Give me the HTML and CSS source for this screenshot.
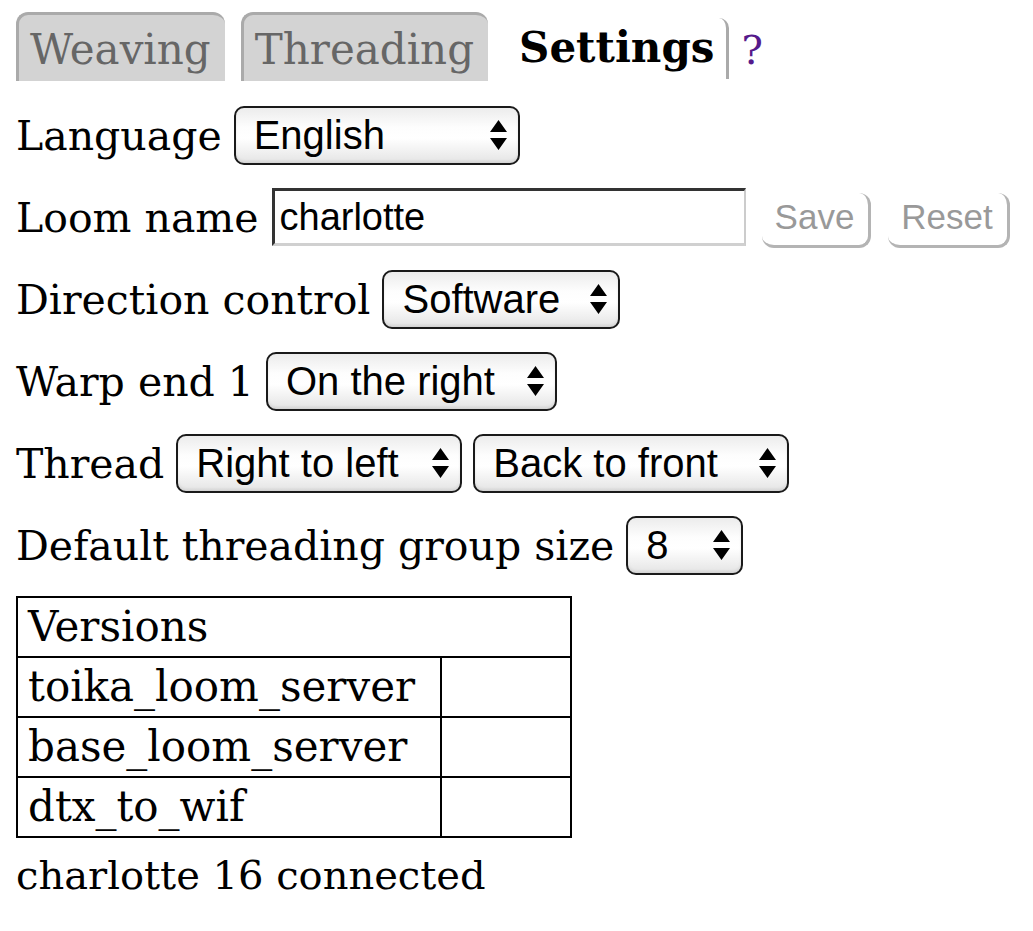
FILE: index.html
```html
<!DOCTYPE html>
<html lang="en">
<head>
<meta charset="utf-8">
<title>Settings</title>
<link rel="stylesheet" href="styles.css">
</head>
<body>
<div class="page">
  <nav class="tabs">
    <span class="tab">Weaving</span>
    <span class="tab">Threading</span>
    <span class="tab tab-active">Settings</span>
    <a class="help" href="#">?</a>
  </nav>

  <div class="row">
    <span class="label">Language</span>
    <span class="sel w-lang"><select><option>English</option></select><svg class="arrows" viewBox="0 0 18 32"><path d="M9 1 L17.5 13 L0.5 13 Z M0.5 19 L17.5 19 L9 31 Z"/></svg></span>
  </div>

  <div class="row">
    <span class="label">Loom name</span>
    <input class="text" type="text" value="charlotte">
    <button class="btn w-save" disabled>Save</button>
    <button class="btn w-reset" disabled>Reset</button>
  </div>

  <div class="row">
    <span class="label">Direction control</span>
    <span class="sel w-dir"><select><option>Software</option></select><svg class="arrows" viewBox="0 0 18 32"><path d="M9 1 L17.5 13 L0.5 13 Z M0.5 19 L17.5 19 L9 31 Z"/></svg></span>
  </div>

  <div class="row">
    <span class="label">Warp end 1</span>
    <span class="sel w-warp"><select><option>On the right</option></select><svg class="arrows" viewBox="0 0 18 32"><path d="M9 1 L17.5 13 L0.5 13 Z M0.5 19 L17.5 19 L9 31 Z"/></svg></span>
  </div>

  <div class="row">
    <span class="label">Thread</span>
    <span class="sel w-th1"><select><option>Right to left</option></select><svg class="arrows" viewBox="0 0 18 32"><path d="M9 1 L17.5 13 L0.5 13 Z M0.5 19 L17.5 19 L9 31 Z"/></svg></span>
    <span class="sel w-th2"><select><option>Back to front</option></select><svg class="arrows" viewBox="0 0 18 32"><path d="M9 1 L17.5 13 L0.5 13 Z M0.5 19 L17.5 19 L9 31 Z"/></svg></span>
  </div>

  <div class="row">
    <span class="label">Default threading group size</span>
    <span class="sel w-group"><select><option>8</option></select><svg class="arrows" viewBox="0 0 18 32"><path d="M9 1 L17.5 13 L0.5 13 Z M0.5 19 L17.5 19 L9 31 Z"/></svg></span>
  </div>

  <table class="versions">
    <tr><th colspan="2">Versions</th></tr>
    <tr><td class="name">toika_loom_server</td><td class="ver"></td></tr>
    <tr><td class="name">base_loom_server</td><td class="ver"></td></tr>
    <tr><td class="name">dtx_to_wif</td><td class="ver"></td></tr>
  </table>

  <p class="status">charlotte 16 connected</p>
</div>
</body>
</html>
```

FILE: styles.css
```css
html, body {
  margin: 0;
  padding: 0;
  background: #fff;
}

body {
  font-family: "DejaVu Serif", "Liberation Serif", serif;
  font-size: 40px;
  color: #000;
}

.page {
  padding: 12px 16px 0 16px;
}

/* Tabs */
.tabs {
  display: flex;
  align-items: flex-start;
  height: 70px;
  margin-bottom: 12px;
}

.tab {
  box-sizing: border-box;
  height: 69px;
  padding: 11px 14px 0 11px;
  margin-right: 16px;
  font-size: 42px;
  line-height: 48px;
  background: #d3d3d3;
  color: #666;
  border-top: 3px solid #aaa;
  border-left: 3px solid #aaa;
  border-radius: 12px 12px 0 0;
}

.tab-active {
  background: none;
  color: #000;
  font-weight: bold;
  border-top: none;
  border-left: none;
  border-right: 3px solid #aaa;
  border-radius: 0 10px 0 0;
  margin-top: 6px;
  height: 61px;
  padding: 6px 12px 0 15px;
  margin-right: 12px;
}

.help {
  color: #551a8b;
  text-decoration: none;
  font-size: 40px;
  line-height: 48px;
  padding-top: 14px;
}

/* Form rows */
.row {
  display: flex;
  align-items: center;
  gap: 12px;
  height: 82px;
}

.label {
  white-space: nowrap;
  font-size: 41px;
  line-height: 48px;
  padding-top: 2px;
}

.sel {
  position: relative;
  display: inline-flex;
  box-sizing: border-box;
  height: 59px;
}

.sel select {
  -webkit-appearance: none;
  appearance: none;
  box-sizing: border-box;
  width: 100%;
  height: 100%;
  margin: 0;
  padding: 0 40px 0 18px;
  font-family: "Liberation Sans", Arial, sans-serif;
  font-size: 40px;
  color: #000;
  border: 2px solid #1a1a1a;
  border-radius: 10px;
  background: linear-gradient(#ececec 0%, #fdfdfd 35%, #ffffff 55%, #e4e4e4 100%);
  box-shadow: inset 0 -2px 3px rgba(0,0,0,0.08);
  outline: none;
}

.arrows {
  position: absolute;
  right: 12px;
  top: 13px;
  width: 19px;
  height: 32px;
  fill: #000;
  pointer-events: none;
}

.w-lang  { width: 286px; }
.w-dir   { width: 238px; }
.w-warp  { width: 291px; }
.w-th1   { width: 286px; }
.w-th2   { width: 316px; margin-left: -1px; }
.w-group { width: 117px; }

.text {
  box-sizing: border-box;
  width: 474px;
  height: 58px;
  margin: 0 4px 0 1px;
  padding: 0 5px;
  font-family: "Liberation Sans", Arial, sans-serif;
  font-size: 38px;
  color: #000;
  border-top: 3px solid #333;
  border-left: 3px solid #333;
  border-right: 2px solid #ccc;
  border-bottom: 3px solid #d0d0d0;
  background: #fff;
  outline: none;
}

.btn {
  box-sizing: border-box;
  height: 55px;
  margin-top: 6px;
  padding: 0 12px 4px 12px;
  font-family: "Liberation Sans", Arial, sans-serif;
  font-size: 35px;
  color: #999;
  background: #fff;
  border: none;
  border-right: 3px solid #b4b4b4;
  border-bottom: 3px solid #b4b4b4;
  border-radius: 12px;
}

.w-save  { width: 109px; }
.w-reset { width: 122px; margin-left: 5px; }

/* Versions table */
.versions {
  border-collapse: collapse;
  margin-top: 10px;
  border: 2px solid #000;
}

.versions th,
.versions td {
  border: 2px solid #000;
  height: 58px;
  padding: 0 10px;
  text-align: left;
  font-weight: normal;
  font-size: 42px;
  line-height: 48px;
  white-space: nowrap;
}

.versions .name { width: 402px; }
.versions .ver  { width: 108px; }

.status {
  margin: 12px 0 0 0;
  line-height: 50px;
}
```
